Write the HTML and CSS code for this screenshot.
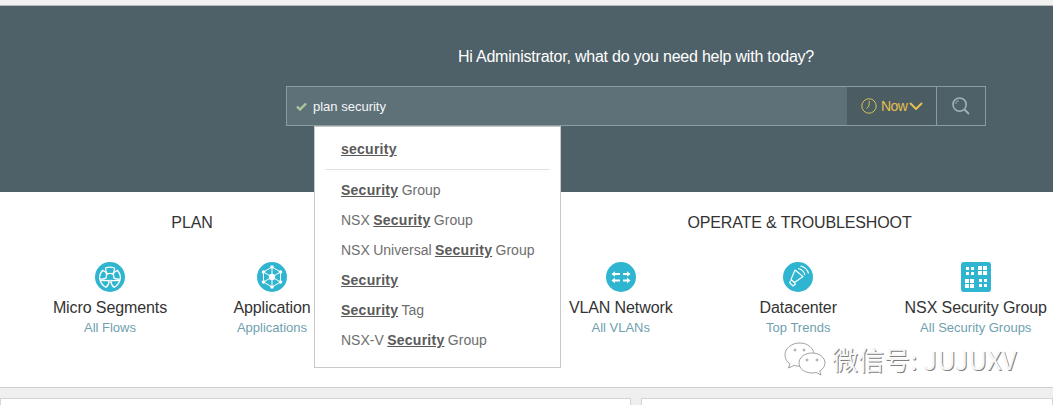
FILE: index.html
```html
<!DOCTYPE html>
<html lang="en">
<head>
    <meta charset="UTF-8">
    <meta name="viewport" content="width=device-width, initial-scale=1.0">
    <title>Search</title>
    <link rel="stylesheet" href="styles.css">
</head>
<body>
    <div class="top-strip"></div>

    <section class="hero">
        <h1>Hi Administrator, what do you need help with today?</h1>

        <div class="search-box">
            <div class="search-input">
                <svg class="check" width="11" height="9" viewBox="0 0 11 9">
                    <path d="M1 4.5 L4 7.5 L10 1.5" fill="none" stroke="#a9c99a" stroke-width="2.4"/>
                </svg>
                <span>plan security</span>
            </div>
            <div class="time-picker">
                <svg width="16" height="16" viewBox="0 0 16 16" fill="none" stroke="#d2c25a" stroke-width="1">
                    <circle cx="8" cy="8" r="7.2"/>
                    <path d="M8.4 3 L7.8 8.2 L5.6 10.6"/>
                </svg>
                <span>Now</span>
                <svg class="chevron" width="14" height="8" viewBox="0 0 14 8">
                    <path d="M1 1 L7 7 L13 1" fill="none" stroke="#e3c24f" stroke-width="2"/>
                </svg>
            </div>
            <div class="search-button">
                <svg width="18" height="18" viewBox="0 0 18 18" fill="none" stroke="#9fb2b8">
                    <circle cx="7.6" cy="7.6" r="6.6" stroke-width="1.6"/>
                    <path d="M3.6 7 A4 4 0 0 1 7 3.6" stroke-width="1"/>
                    <path d="M12.6 12.6 L17 17" stroke-width="2"/>
                </svg>
            </div>
        </div>
    </section>

    <section class="shortcuts">
        <div class="group group-plan">
            <h2>PLAN</h2>
            <div class="items">
                <div class="item">
                    <svg class="icon" width="30" height="30" viewBox="0 0 30 30">
                        <circle cx="15" cy="15" r="15" fill="#2fb5cf"/>
                        <g fill="none" stroke="#fff" stroke-width="1.3" stroke-linejoin="round">
                            <path d="M10.500 6 Q15 4.200 19.500 6 Q19.500 10 17.800 12 Q15 10.800 12.500 12 Q10.500 10 10.500 6 Z"/>
                            <path d="M21.500 7.500 Q25.500 11 25.500 15.800 Q21.500 16.800 18.800 15.500 Q18.800 12.800 17.800 11.800 Q19 9 21.500 7.500 Z" transform="rotate(6 15 15)"/>
                            <path d="M25 18 Q23.500 23 19 25.300 Q16 23 15.800 18.500 Q21 18.800 25 18 Z"/>
                            <path d="M5 18 Q6.500 23 11 25.300 Q14 23 14.200 18.500 Q9 18.800 5 18 Z"/>
                            <path d="M8.500 7.500 Q4.500 11 4.500 15.800 Q8.500 16.800 11.200 15.500 Q11.200 12.800 12.200 11.800 Q11 9 8.500 7.500 Z" transform="rotate(-6 15 15)"/>
                        </g>
                    </svg>
                    <div class="item-name">Micro Segments</div>
                    <a class="item-link">All Flows</a>
                </div>
                <div class="item">
                    <svg class="icon" width="30" height="30" viewBox="0 0 30 30">
                        <circle cx="15" cy="15" r="15" fill="#2fb5cf"/>
                        <g fill="none" stroke="#fff" stroke-width="1">
                            <path d="M15 5 L23.5 10 V20 L15 25 L6.500 20 V10 Z"/>
                            <path d="M15 5 V25 M6.500 10 L23.500 20 M23.500 10 L6.500 20"/>
                        </g>
                        <g fill="#fff">
                            <circle cx="15" cy="15" r="3.200"/>
                            <circle cx="15" cy="5" r="1.800"/>
                            <circle cx="23.500" cy="10" r="1.800"/>
                            <circle cx="23.500" cy="20" r="1.800"/>
                            <circle cx="15" cy="25" r="1.800"/>
                            <circle cx="6.500" cy="20" r="1.800"/>
                            <circle cx="6.500" cy="10" r="1.800"/>
                        </g>
                    </svg>
                    <div class="item-name">Application</div>
                    <a class="item-link">Applications</a>
                </div>
            </div>
        </div>

        <div class="group group-operate">
            <h2>OPERATE &amp; TROUBLESHOOT</h2>
            <div class="items">
                <div class="item">
                    <svg class="icon" width="30" height="30" viewBox="0 0 30 30">
                        <circle cx="15" cy="15" r="15" fill="#2fb5cf"/>
                        <g fill="none" stroke="#fff" stroke-width="1.800">
                            <path d="M8 12 H14 M17 12 H22"/>
                            <path d="M8 18.500 H14 M17 18.500 H22"/>
                        </g>
                        <g fill="#fff">
                            <path d="M9 9.200 L5.500 12 L9 14.800 Z"/>
                            <path d="M21 9.200 L24.500 12 L21 14.800 Z"/>
                            <path d="M9 15.700 L5.500 18.500 L9 21.300 Z"/>
                            <path d="M21 15.700 L24.500 18.500 L21 21.300 Z"/>
                        </g>
                    </svg>
                    <div class="item-name">VLAN Network</div>
                    <a class="item-link">All VLANs</a>
                </div>
                <div class="item">
                    <svg class="icon" width="30" height="30" viewBox="0 0 30 30">
                        <circle cx="15" cy="15" r="15" fill="#2fb5cf"/>
                        <g fill="none" stroke="#fff" stroke-width="1.100" stroke-linejoin="round">
                            <path d="M12 8 L20 14.500 L11.500 20.500 L8 17.500 Z"/>
                            <path d="M8.500 18 L6.500 20.500 L10 24 L12.500 22 L10.500 19.700"/>
                            <path d="M15 6.500 Q20.500 7.500 22 13"/>
                            <path d="M17.500 4 Q24 5.500 25.500 11.500"/>
                        </g>
                    </svg>
                    <div class="item-name">Datacenter</div>
                    <a class="item-link">Top Trends</a>
                </div>
                <div class="item">
                    <svg class="icon" width="30" height="30" viewBox="0 0 30 30">
                        <rect width="30" height="30" rx="3" fill="#2fb5cf"/>
                        <g fill="#fff">
                            <rect x="5" y="5" width="3" height="3"/>
                            <rect x="10" y="5" width="3" height="3"/>
                            <rect x="5" y="10" width="3" height="3"/>
                            <rect x="10" y="10" width="3" height="3"/>
                            <rect x="17" y="4" width="4" height="4"/>
                            <rect x="22" y="4" width="4" height="4"/>
                            <rect x="17" y="9" width="4" height="4"/>
                            <rect x="22" y="9" width="4" height="4"/>
                            <rect x="4" y="17" width="4" height="4"/>
                            <rect x="9" y="17" width="4" height="4"/>
                            <rect x="4" y="22" width="4" height="4"/>
                            <rect x="9" y="22" width="4" height="4"/>
                            <rect x="18" y="17" width="3" height="3"/>
                            <rect x="23" y="17" width="3" height="3"/>
                            <rect x="18" y="22" width="3" height="3"/>
                            <rect x="23" y="22" width="3" height="3"/>
                        </g>
                    </svg>
                    <div class="item-name">NSX Security Group</div>
                    <a class="item-link">All Security Groups</a>
                </div>
            </div>
        </div>
    </section>

    <div class="cards">
        <div class="card card-left"></div>
        <div class="card card-right"></div>
    </div>

    <!-- Suggestions, over the hero and the shortcuts -->
    <div class="suggestions">
        <div class="suggestion-top"><b>security</b></div>
        <ul>
            <li><b>Security</b> Group</li>
            <li>NSX <b>Security</b> Group</li>
            <li>NSX Universal <b>Security</b> Group</li>
            <li><b>Security</b></li>
            <li><b>Security</b> Tag</li>
            <li>NSX-V <b>Security</b> Group</li>
        </ul>
    </div>

    <div class="watermark">
        <svg width="42" height="34" viewBox="0 0 42 34" fill="#fff" stroke="#8a8a8a" stroke-width="0.8">
            <path d="M16 1 C7 1 1 6.500 1 13 C1 17 3 20 6 22 L4.500 26 L10 23.500 C12 24 14 24.200 16 24.200 C24 24.200 30 19 30 13 C30 6.500 24 1 16 1 Z"/>
            <path d="M28 11 C20.500 11 15 15.500 15 21 C15 26.500 20.500 31 28 31 C29.500 31 31 30.800 32 30.400 L37 33 L35.800 29 C39 27 41 24 41 21 C41 15.500 35.500 11 28 11 Z"/>
            <circle cx="11" cy="8" r="1"/>
            <circle cx="20" cy="8" r="1"/>
            <circle cx="23" cy="18" r="1"/>
            <circle cx="33" cy="18" r="1"/>
        </svg>
        <span>微信号: JUJUXV</span>
    </div>
</body>
</html>
```

FILE: styles.css
```css
* {
    margin: 0;
    padding: 0;
    box-sizing: border-box;
}

html, body {
    height: 406px;
    overflow: hidden;
}

body {
    position: relative;
    background-color: white;
    font-family: "Liberation Sans", Arial, sans-serif;
    color: #333;
}

.top-strip {
    height: 6px;
    background-color: #f1f1f1;
    border-bottom: 1px solid #b5b9ba;
}

.hero {
    height: 186px;
    padding-top: 42px;
    background-color: #4f6168;
    display: flex;
    flex-direction: column;
    align-items: center;
    padding-left: 219px;
    color: white;
}

.hero h1 {
    font-size: 16px;
    font-weight: normal;
    line-height: 18px;
    letter-spacing: -0.22px;
}

.search-box {
    width: 700px;
    height: 40px;
    margin-top: 20px;
    border: 1px solid #8b9ca1;
    display: flex;
}

.search-input {
    flex: 1;
    background-color: #5f7178;
    display: flex;
    align-items: center;
    padding-left: 9px;
    font-size: 13px;
    color: #f4f6f6;
}

.check {
    margin-right: 6px;
}

.time-picker {
    width: 89px;
    background-color: #4b5c63;
    display: flex;
    align-items: center;
    padding-left: 14px;
    gap: 4px;
    font-size: 14px;
    color: #e6bf4f;
    letter-spacing: -0.6px;
}

.chevron {
    margin-left: -2px;
}

.search-button {
    width: 49px;
    border-left: 1px solid #8b9ca1;
    display: flex;
    align-items: center;
    justify-content: center;
}

.shortcuts {
    height: 195px;
    display: flex;
    overflow: hidden;
}

.group {
    flex: none;
    padding-top: 22px;
}

.group h2 {
    font-size: 16px;
    font-weight: normal;
    line-height: 18px;
    text-align: center;
    letter-spacing: -0.13px;
    color: #333;
}

.group-plan {
    width: 384px;
    margin-right: 149px;
}

.group-operate {
    width: 533px;
}

.items {
    display: flex;
    margin-top: 30px;
}

.group-plan .items {
    padding-left: 29px;
}

.group-operate .items {
    margin-left: -1px;
}

.group-plan .item {
    width: 162px;
}

.group-operate .item {
    width: 177.5px;
}

.item {
    flex: none;
    display: flex;
    flex-direction: column;
    align-items: center;
}

.item-name {
    margin-top: 7px;
    font-size: 16px;
    line-height: 18px;
    letter-spacing: -0.1px;
    color: #333;
    white-space: nowrap;
}

.item-link {
    margin-top: 3px;
    font-size: 13px;
    line-height: 15px;
    color: #6f9fb0;
    white-space: nowrap;
}

.cards {
    height: 18px;
    background-color: #efefef;
    border-top: 1px solid #cfcfcf;
    padding-top: 10px;
    display: flex;
    gap: 10px;
}

.card {
    background-color: white;
    border: 1px solid #d4d4d4;
    border-bottom: none;
}

.card-left {
    width: 631px;
}

.card-right {
    flex: 1;
}

.suggestions {
    position: absolute;
    left: 314px;
    top: 126px;
    width: 247px;
    height: 242px;
    background-color: white;
    border: 1px solid #c9c9c9;
    font-size: 14px;
    color: #6e6e6e;
}

.suggestions b {
    color: #5a5a5a;
    text-decoration: underline;
    letter-spacing: 0.25px;
}

.suggestion-top {
    height: 43px;
    margin: 0 10px;
    padding: 14px 16px 0;
    line-height: 16px;
    border-bottom: 1px solid #e2e2e2;
}

.suggestions ul {
    list-style: none;
    padding-top: 5px;
}

.suggestions li {
    height: 30px;
    line-height: 30px;
    padding-left: 26px;
    word-spacing: -0.5px;
}

.watermark {
    position: absolute;
    left: 784px;
    top: 342px;
    display: flex;
    align-items: center;
    gap: 6px;
    font-family: "Noto Sans CJK SC", "Liberation Sans", sans-serif;
    font-size: 26px;
    line-height: 34px;
    color: #f7f7f7;
    text-shadow: 1px 1px 0 #808080;
    white-space: nowrap;
}
```
